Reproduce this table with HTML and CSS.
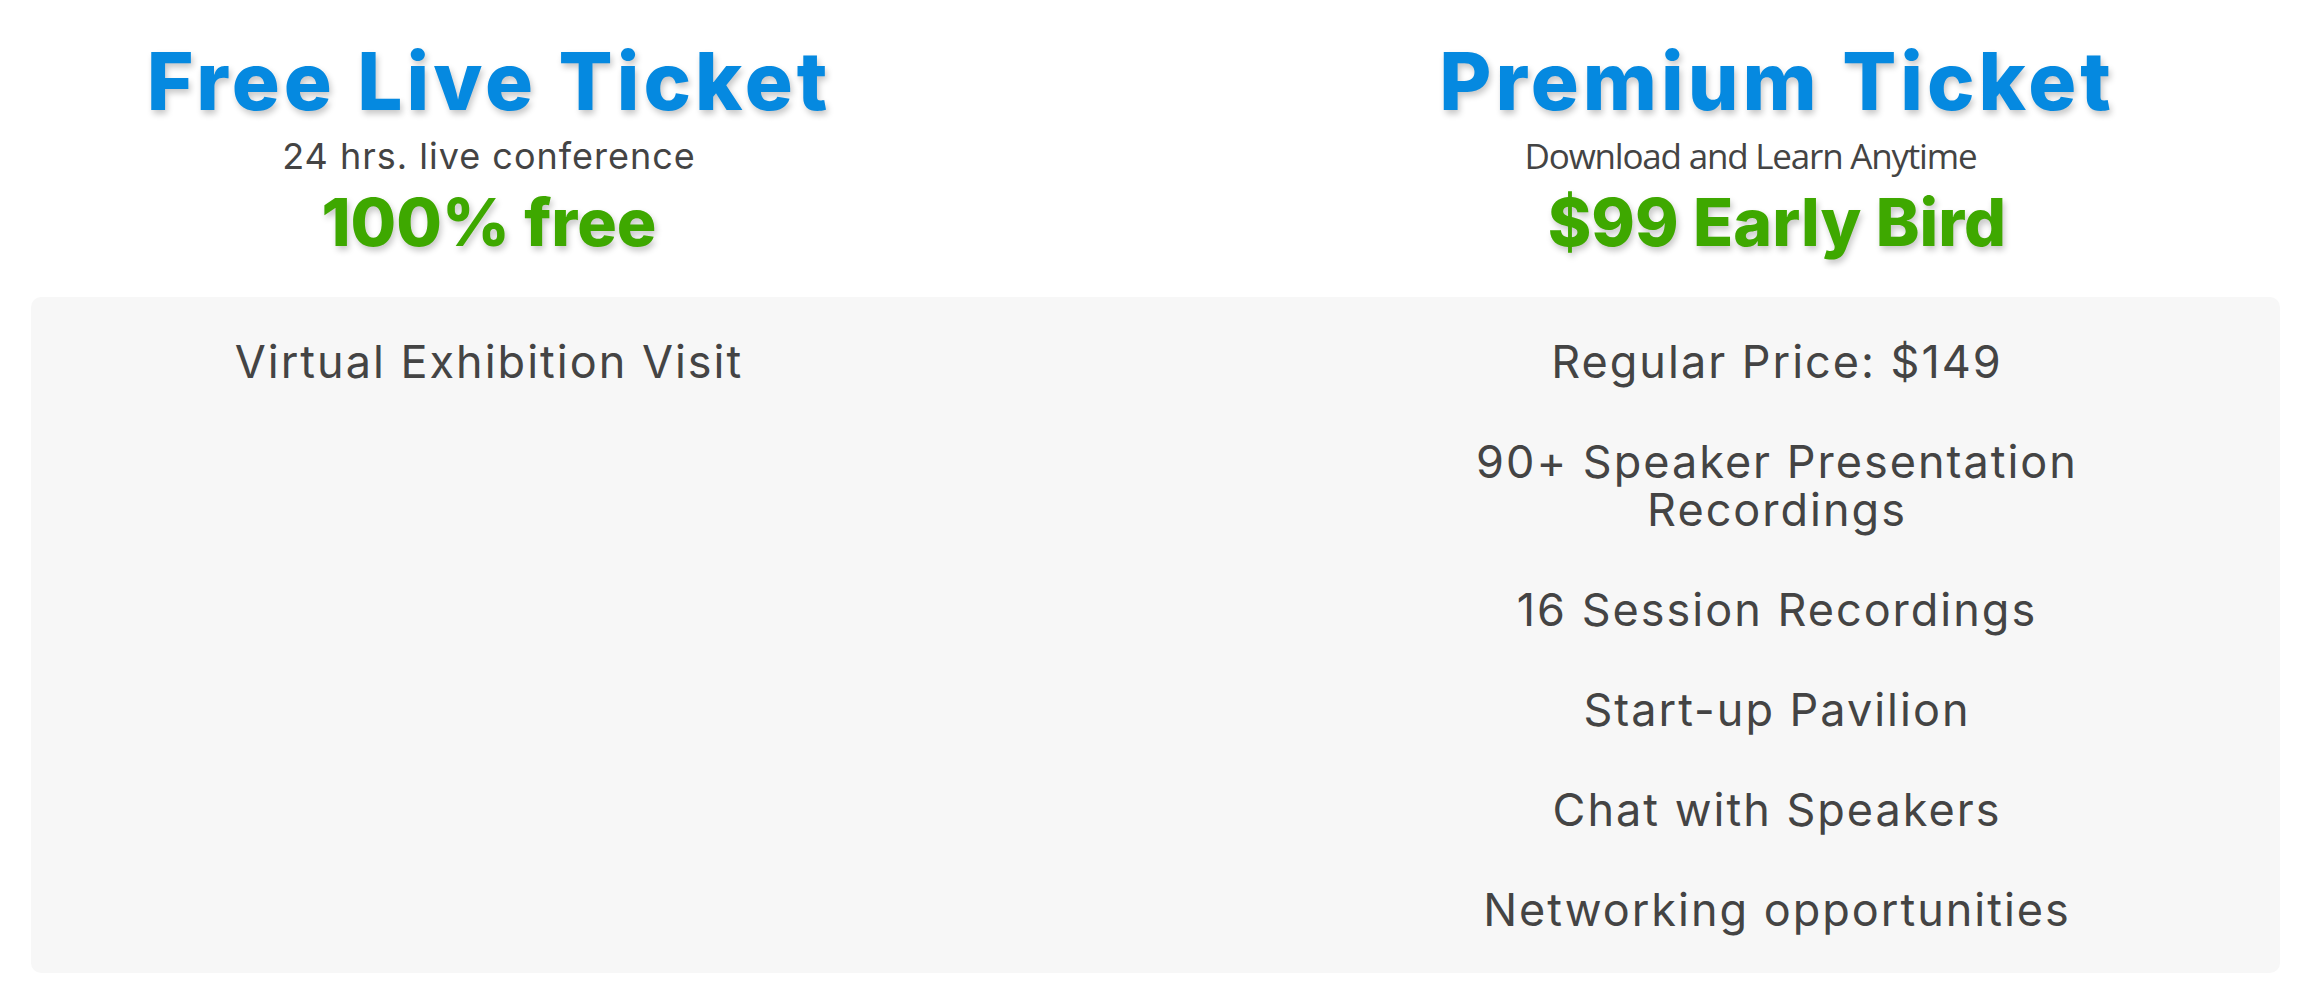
FILE: index.html
```html
<!DOCTYPE html>
<html lang="en">
<head>
<meta charset="utf-8">
<title>Tickets</title>
<link rel="stylesheet" href="styles.css">
</head>
<body>
<div class="page">
  <div class="heads">
    <div class="head">
      <h2 class="title">Free Live Ticket</h2>
      <p class="sub">24 hrs. live conference</p>
      <p class="price">100% free</p>
    </div>
    <div class="head head-right">
      <h2 class="title">Premium Ticket</h2>
      <p class="sub sub-alt">Download and Learn Anytime</p>
      <p class="price">$99 Early Bird</p>
    </div>
  </div>
  <div class="box">
    <ul class="features">
      <li>Virtual Exhibition Visit</li>
    </ul>
    <ul class="features features-right">
      <li>Regular Price: $149</li>
      <li><span class="line">90+ Speaker Presentation</span><span class="line">Recordings</span></li>
      <li>16 Session Recordings</li>
      <li>Start-up Pavilion</li>
      <li>Chat with Speakers</li>
      <li>Networking opportunities</li>
    </ul>
  </div>
</div>
</body>
</html>
```
FILE: styles.css
```css
html, body {
  margin: 0;
  padding: 0;
  background: #ffffff;
}

.page {
  padding: 41px 26px 0 31px;
  font-family: "Inter", "Liberation Sans", sans-serif;
  color: #444444;
}

.heads,
.box {
  display: grid;
  grid-template-columns: 916px 1fr 1006px;
}

.head {
  grid-column: 1;
  display: flex;
  flex-direction: column;
  align-items: center;
  text-align: center;
}

.head-right {
  grid-column: 3;
}

.title {
  margin: 0;
  font-size: 80px;
  line-height: 80px;
  font-weight: 800;
  letter-spacing: 4px;
  color: #0589e0;
  text-shadow: 2px 4px 6px rgba(0, 0, 0, 0.22);
}

.sub {
  margin: 15px 0 0;
  font-size: 36px;
  line-height: 40px;
  font-weight: 400;
  letter-spacing: 1px;
  color: #444444;
}

.sub-alt {
  font-family: "Open Sans", "Liberation Sans", sans-serif;
  font-size: 35px;
  letter-spacing: -1.2px;
  margin-right: 53px;
}

.price {
  margin: 13px 0 0;
  font-size: 66px;
  line-height: 66px;
  font-weight: 800;
  color: #3ea800;
  text-shadow: 2px 4px 6px rgba(0, 0, 0, 0.22);
}

.box {
  margin-top: 42px;
  background: #f7f7f7;
  border-radius: 10px;
  padding: 15px 0 13px;
}

.features {
  grid-column: 1;
  list-style: none;
  margin: 0;
  padding: 0;
  text-align: center;
}

.features-right {
  grid-column: 3;
}

.features li {
  padding: 26px 0;
  font-size: 45px;
  line-height: 48px;
  letter-spacing: 2px;
  color: #444444;
}

.line {
  display: block;
}
```
